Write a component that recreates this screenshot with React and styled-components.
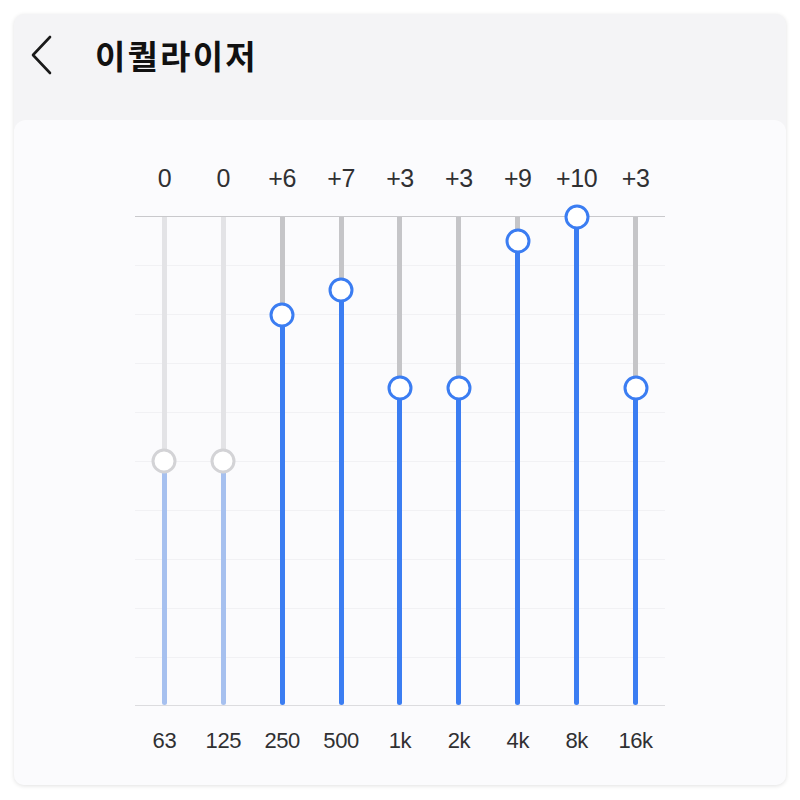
import React from "react";
import styled, { createGlobalStyle } from "styled-components";

const GlobalStyle = createGlobalStyle`
	body {
		margin: 0;
		background: #ffffff;
		font-family: "Liberation Sans", "Noto Sans CJK KR", sans-serif;
	}
`;

const bands = [
	{ freq: "63", gain: 0 },
	{ freq: "125", gain: 0 },
	{ freq: "250", gain: 6 },
	{ freq: "500", gain: 7 },
	{ freq: "1k", gain: 3 },
	{ freq: "2k", gain: 3 },
	{ freq: "4k", gain: 9 },
	{ freq: "8k", gain: 10 },
	{ freq: "16k", gain: 3 },
];

const RANGE = 10;
const CHART_HEIGHT = 490;

const Page = styled.div`
	padding: 14px;
	height: 800px;
	box-sizing: border-box;
`;

const Window = styled.div`
	height: 771px;
	background: #f4f4f6;
	border-radius: 10px;
	box-shadow: 0 1px 4px rgba(0, 0, 0, 0.12);
	display: flex;
	flex-direction: column;
	overflow: hidden;
`;

const Header = styled.header`
	height: 106px;
	display: flex;
	align-items: flex-start;
	padding: 21px 0 0 16px;
	box-sizing: border-box;
	gap: 41px;
`;

const BackButton = styled.button`
	border: none;
	background: none;
	padding: 0;
	width: 24px;
	height: 40px;
	display: flex;
	align-items: center;
	justify-content: flex-start;
	cursor: pointer;
`;

const Title = styled.h1`
	margin: 0;
	font-family: "Noto Sans CJK KR", sans-serif;
	font-size: 33px;
	font-weight: 700;
	line-height: 40px;
	color: #111111;
	letter-spacing: 2.2px;
`;

const Panel = styled.section`
	flex: 1;
	background: #fbfbfd;
	border-radius: 12px 12px 0 0;
	padding-top: 40px;
	display: flex;
	flex-direction: column;
	align-items: center;
`;

const Board = styled.div`
	width: 530px;
	display: flex;
	flex-direction: column;
`;

const LabelRow = styled.div`
	display: grid;
	grid-template-columns: repeat(${(p) => p.count}, 1fr);
	height: ${(p) => p.height}px;
	margin-top: ${(p) => p.offset || 0}px;
	margin-bottom: ${(p) => p.after || 0}px;
`;

const Label = styled.span`
	text-align: center;
	font-size: ${(p) => p.size}px;
	line-height: ${(p) => p.height}px;
	color: #303032;
	letter-spacing: -0.4px;
	white-space: nowrap;
`;

const Chart = styled.div`
	height: ${CHART_HEIGHT}px;
	display: grid;
	grid-template-columns: repeat(${(p) => p.count}, 1fr);
	border-top: 1px solid #c9c9cc;
	border-bottom: 1px solid #dcdcdf;
	box-sizing: border-box;
	background-image: repeating-linear-gradient(
		to bottom,
		transparent 0,
		transparent 48px,
		#f1f1f4 48px,
		#f1f1f4 49px
	);
`;

const Slider = styled.div`
	position: relative;
	display: flex;
	flex-direction: column;
	align-items: center;
`;

const Track = styled.div`
	width: 5px;
	background: ${(p) => (p.flat ? "#e3e3e6" : "#c5c5c8")};
`;

const Fill = styled.div`
	width: 5px;
	flex: 1;
	border-radius: 0 0 3px 3px;
	background: ${(p) => (p.flat ? "#a6c0ef" : "#3b7df2")};
`;

const Knob = styled.div`
	position: absolute;
	left: 50%;
	width: 25px;
	height: 25px;
	box-sizing: border-box;
	border-radius: 50%;
	background: #ffffff;
	border: 3px solid ${(p) => (p.flat ? "#d3d3d6" : "#3b7df2")};
	transform: translate(-50%, -50%);
`;

function Chevron() {
	return (
		<svg width="24" height="40" viewBox="0 0 24 40" fill="none">
			<path
				d="M20 2 L3 20 L20 38"
				stroke="#1a1a1a"
				strokeWidth="2.6"
				strokeLinecap="round"
				strokeLinejoin="round"
			/>
		</svg>
	);
}

function Band({ gain }) {
	const flat = gain === 0;
	const knobY = ((RANGE - gain) / (RANGE * 2)) * (CHART_HEIGHT - 2);
	return (
		<Slider>
			<Track flat={flat} style={{ height: knobY }} />
			<Fill flat={flat} />
			<Knob flat={flat} style={{ top: knobY }} />
		</Slider>
	);
}

const formatGain = (g) => (g > 0 ? `+${g}` : `${g}`);

export default function App() {
	return (
		<>
			<GlobalStyle />
			<Page>
				<Window>
					<Header>
						<BackButton aria-label="뒤로">
							<Chevron />
						</BackButton>
						<Title>이퀄라이저</Title>
					</Header>
					<Panel>
						<Board>
							<LabelRow count={bands.length} height={36} after={20}>
								{bands.map((b) => (
									<Label key={b.freq} size={25} height={36}>
										{formatGain(b.gain)}
									</Label>
								))}
							</LabelRow>
							<Chart count={bands.length}>
								{bands.map((b) => (
									<Band key={b.freq} gain={b.gain} />
								))}
							</Chart>
							<LabelRow count={bands.length} height={30} offset={20}>
								{bands.map((b) => (
									<Label key={b.freq} size={22} height={30}>
										{b.freq}
									</Label>
								))}
							</LabelRow>
						</Board>
					</Panel>
				</Window>
			</Page>
		</>
	);
}
